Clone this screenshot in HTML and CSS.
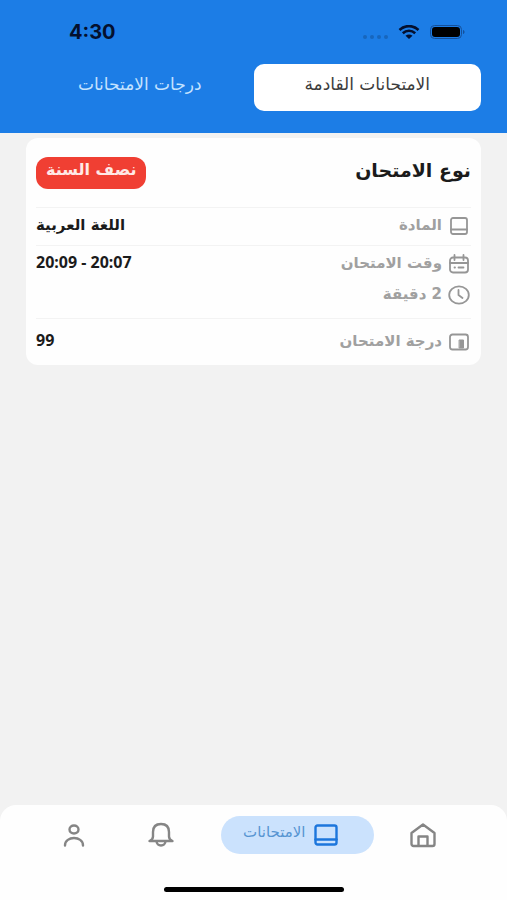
FILE: index.html
```html
<!DOCTYPE html>
<html lang="ar" dir="rtl">
<head>
<meta charset="utf-8">
<meta name="viewport" content="width=device-width, initial-scale=1">
<title>الامتحانات</title>
<link rel="stylesheet" href="styles.css">
</head>
<body>
<header class="header">
  <div class="status" dir="ltr">
    <time class="clock">4:30</time>
    <div class="status-icons">
      <span class="signal"><i></i><i></i><i></i><i></i></span>
      <svg class="wifi" viewBox="0 0 22 14" aria-hidden="true">
        <path d="M1.500 5C7-.2 15-.2 20.500 5M4.800 8.200c3.600-3.200 8.800-3.200 12.400 0" fill="none" stroke="currentColor" stroke-width="2.600"/>
        <path d="M7.500 10.800c2-1.700 5-1.700 7 0L11 14z" fill="currentColor"/>
      </svg>
      <svg class="battery" viewBox="0 0 36 14" aria-hidden="true">
        <rect x=".5" y=".5" width="31" height="13" rx="4" fill="none" stroke="#14509a"/>
        <rect x="2" y="2" width="28" height="10" rx="3" fill="currentColor"/>
        <path d="M33 5v4c2-.5 2-3.500 0-4z" fill="#14509a"/>
      </svg>
    </div>
  </div>
  <nav class="tabs">
    <button class="tab tab-active" type="button">الامتحانات القادمة</button>
    <button class="tab" type="button">درجات الامتحانات</button>
  </nav>
</header>

<main class="content">
  <article class="card">
    <div class="card-head">
      <h1 class="card-title">نوع الامتحان</h1>
      <span class="badge">نصف السنة</span>
    </div>
    <div class="row">
      <div class="label">
        <svg class="icon" viewBox="0 0 22 20" aria-hidden="true"><rect x="3" y="2" width="16" height="16" rx="2"/><path d="M3 13.500h16"/></svg>
        <span>المادة</span>
      </div>
      <span class="value">اللغة العربية</span>
    </div>
    <div class="row">
      <div class="stack">
        <div class="label">
          <svg class="icon" viewBox="0 0 22 20" aria-hidden="true"><rect x="2" y="3.500" width="18" height="15" rx="3"/><path d="M2 9h18M6.500 1v5M15.500 1v5M6.500 13.500h.5M10.500 13.500h5"/></svg>
          <span>وقت الامتحان</span>
        </div>
        <div class="label">
          <svg class="icon" viewBox="0 0 22 20" aria-hidden="true"><ellipse cx="11" cy="10" rx="9.800" ry="8.600"/><path d="M10.500 5v5l4 3"/></svg>
          <span>2 دقيقة</span>
        </div>
      </div>
      <span class="value value-number" dir="ltr">20:09 - 20:07</span>
    </div>
    <div class="row row-last">
      <div class="label">
        <svg class="icon" viewBox="0 0 22 20" aria-hidden="true"><rect x="2" y="2.500" width="18" height="15" rx="2.500"/><path d="M11.500 8h4v8h-4z" fill="currentColor" stroke-width="1"/></svg>
        <span>درجة الامتحان</span>
      </div>
      <span class="value value-number">99</span>
    </div>
  </article>
</main>

<footer class="footer">
  <nav class="nav">
    <a class="nav-link" href="#" aria-label="الرئيسية">
      <svg class="nav-icon" viewBox="0 0 26 26" aria-hidden="true"><path d="M1.500 11 13 2.500 24.500 11v11a2 2 0 0 1-2 2h-19a2 2 0 0 1-2-2zM8.500 24V14.500h9V24"/></svg>
    </a>
    <a class="nav-link nav-active" href="#">
      <svg class="nav-icon" viewBox="0 0 26 26" aria-hidden="true"><rect x="2.500" y="3.500" width="21" height="19" rx="2"/><path d="M2.500 17.500h21"/></svg>
      <span class="nav-text">الامتحانات</span>
    </a>
    <a class="nav-link" href="#" aria-label="الإشعارات">
      <svg class="nav-icon" viewBox="0 0 26 26" aria-hidden="true"><path d="M13 2C8 2 5 5 5 10v4.500c0 2-1 3.500-3.500 4.500h23c-2.500-1-3.500-2.500-3.500-4.500V10c0-5-3-8-8-8zM8.500 19c0 6 9 6 9 0"/></svg>
    </a>
    <a class="nav-link" href="#" aria-label="الحساب">
      <svg class="nav-icon" viewBox="0 0 26 26" aria-hidden="true"><ellipse cx="13" cy="7.500" rx="4.500" ry="4"/><path d="M4 23.500c0-10 18-10 18 0"/></svg>
    </a>
  </nav>
  <div class="home-bar"></div>
</footer>
</body>
</html>
```

FILE: styles.css
```css
* {
  box-sizing: border-box;
}

body {
  margin: 0;
  min-height: 100vh;
  display: flex;
  flex-direction: column;
  background: #f2f2f2;
  color: #1b1b1b;
  font-family: "DejaVu Sans", sans-serif;
  font-size: 16px;
  line-height: 20px;
}

.header {
  background: #1c7de6;
  padding: 20px 26px 22px;
}

.status {
  display: flex;
  align-items: center;
  justify-content: space-between;
  height: 24px;
  margin-bottom: 20px;
  padding: 0 15px 0 43px;
  color: #04102e;
}

.clock {
  font: 700 20px/24px Inter, sans-serif;
}

.status-icons {
  display: flex;
  align-items: center;
  gap: 10px;
}

.signal {
  display: flex;
  gap: 3px;
  padding-top: 10px;
}

.signal i {
  width: 4px;
  height: 4px;
  border-radius: 50%;
  background: #1766bd;
}

.wifi {
  width: 22px;
  height: 14px;
}

.battery {
  width: 36px;
  height: 14px;
  color: #000;
}

.tabs {
  display: grid;
  grid-template-columns: 1fr 1fr;
}

.tab {
  height: 47px;
  padding: 0 0 8px;
  border: 0;
  border-radius: 10px;
  background: transparent;
  color: #c5e3ff;
  font: inherit;
  font-size: 17px;
}

.tab-active {
  background: #fff;
  color: #3c3c3c;
}

.content {
  flex: 1;
  padding: 5px 26px;
}

.card {
  padding: 0 10px;
  border-radius: 12px;
  background: #fefefe;
}

.card-head {
  display: flex;
  justify-content: space-between;
  align-items: center;
  height: 69px;
}

.card-title {
  margin: 0;
  padding-bottom: 6px;
  font-size: 19px;
  line-height: 28px;
}

.badge {
  padding: 3px 10px 9px;
  border-radius: 12px;
  background: #f03f33;
  color: #ffe9e6;
  font-weight: 700;
}

.row {
  display: flex;
  justify-content: space-between;
  padding: 7px 0 10px;
  border-top: 1px solid #f3f3f3;
}

.row-last {
  padding: 12px 0 14px;
}

.stack {
  display: grid;
  gap: 11px;
  padding-bottom: 4px;
}

.label {
  display: flex;
  gap: 6px;
  padding-right: 1px;
  color: #a0a0a0;
  font-size: 15px;
  font-weight: 700;
}

.icon {
  width: 22px;
  height: 20px;
  margin-top: 1px;
  margin-bottom: -1px;
  fill: none;
  stroke: #969696;
  color: #969696;
  stroke-width: 1.8;
  stroke-linecap: round;
  stroke-linejoin: round;
}

.value {
  font-size: 15px;
  font-weight: 700;
}

.value-number {
  font-family: "Noto Sans", sans-serif;
  font-size: 16px;
  line-height: 18px;
}

.footer {
  padding: 11px 0 8px;
  border-radius: 16px 16px 0 0;
  background: #fefefe;
}

.nav {
  display: grid;
  grid-template-columns: 1fr auto 1fr 1fr;
  align-items: center;
  padding: 0 41px 0 31px;
}

.nav-link {
  display: flex;
  justify-content: center;
  align-items: center;
  height: 38px;
  color: #858585;
  text-decoration: none;
}

.nav-active {
  gap: 8px;
  margin: 0 5px 0 17px;
  padding: 0 35px 0 22px;
  border-radius: 19px;
  background: #cbe2fd;
  color: #1c76dc;
}

.nav-icon {
  width: 26px;
  height: 26px;
  fill: none;
  stroke: currentColor;
  stroke-width: 2.4;
  stroke-linecap: round;
  stroke-linejoin: round;
}

.nav-text {
  padding-bottom: 7px;
  color: #5795d2;
  font-size: 15px;
}

.home-bar {
  width: 180px;
  max-width: 50%;
  height: 5px;
  margin: 33px auto 0;
  border-radius: 3px;
  background: #000;
}
```
